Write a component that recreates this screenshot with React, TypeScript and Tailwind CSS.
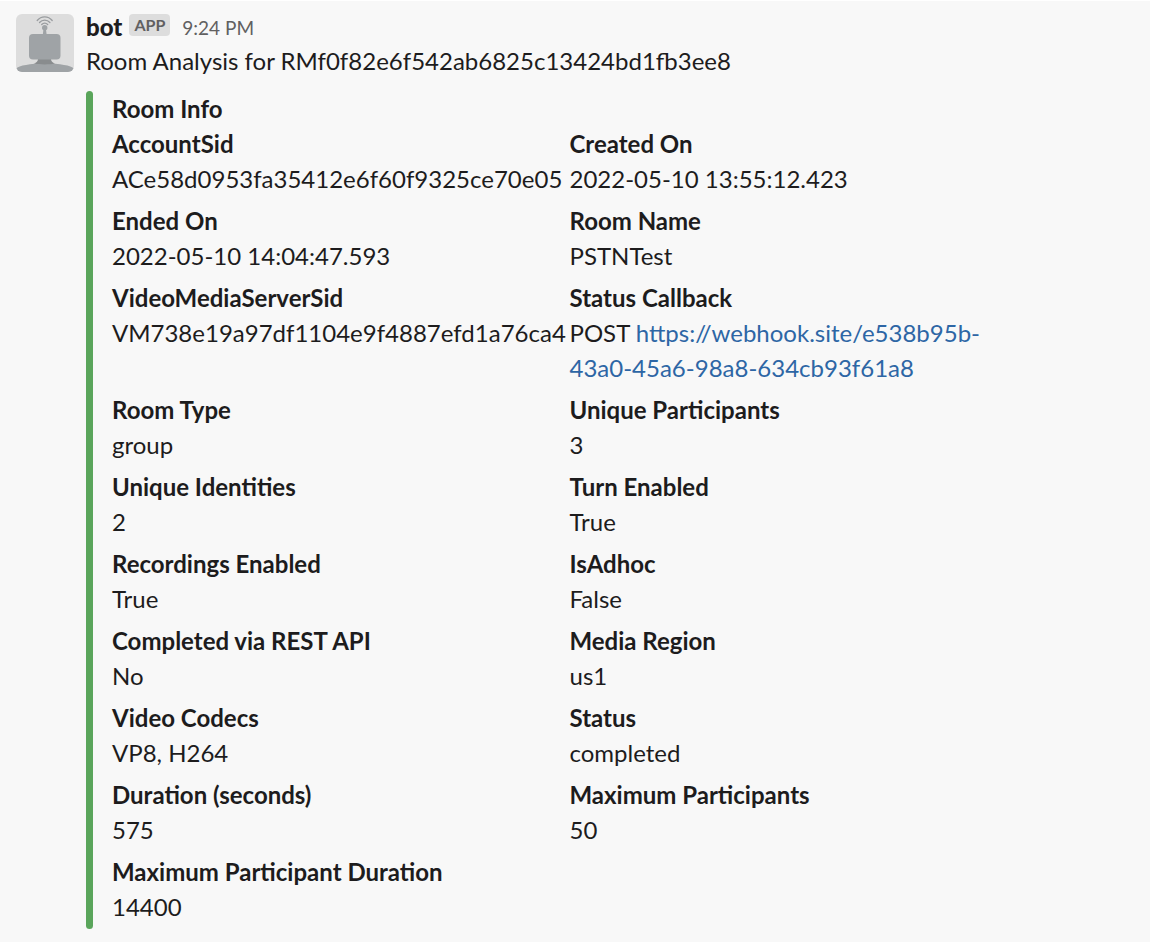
const fields: { label: string; value: string; link?: string }[] = [
  { label: "AccountSid", value: "ACe58d0953fa35412e6f60f9325ce70e05" },
  { label: "Created On", value: "2022-05-10 13:55:12.423" },
  { label: "Ended On", value: "2022-05-10 14:04:47.593" },
  { label: "Room Name", value: "PSTNTest" },
  { label: "VideoMediaServerSid", value: "VM738e19a97df1104e9f4887efd1a76ca4" },
  { label: "Status Callback", value: "POST ", link: "https://webhook.site/e538b95b-43a0-45a6-98a8-634cb93f61a8" },
  { label: "Room Type", value: "group" },
  { label: "Unique Participants", value: "3" },
  { label: "Unique Identities", value: "2" },
  { label: "Turn Enabled", value: "True" },
  { label: "Recordings Enabled", value: "True" },
  { label: "IsAdhoc", value: "False" },
  { label: "Completed via REST API", value: "No" },
  { label: "Media Region", value: "us1" },
  { label: "Video Codecs", value: "VP8, H264" },
  { label: "Status", value: "completed" },
  { label: "Duration (seconds)", value: "575" },
  { label: "Maximum Participants", value: "50" },
  { label: "Maximum Participant Duration", value: "14400" },
];

function BotAvatar() {
  return (
    <svg viewBox="0 0 58 58" className="size-[58px] shrink-0 rounded-[6px]" role="img" aria-label="bot avatar">
      <rect width="58" height="58" fill="#dddddd" />
      <path d="M0 54.500c3-3 14-5 29-5s26 2 29 5V58H0z" fill="#9fa3a6" />
      <path d="M22 45h13c0 2.300 1.500 3.500 4 4.500-6 1.200-15 1.200-21 0 2.500-1 4-2.200 4-4.500z" fill="#898c8e" />
      <rect x="13" y="20" width="31.500" height="25.500" rx="4" fill="#9fa3a6" />
      <path d="M27.600 14h2.200l.8 6.500h-3.800z" fill="#9fa3a6" />
      <circle cx="28.700" cy="13.700" r="2.700" fill="#9fa3a6" />
      <g fill="none" stroke="#999c9f" strokeWidth="1.300" strokeLinecap="round">
        <path d="M21.200 6.500c4-4.800 11-4.800 15 0" />
        <path d="M23.500 8.500c2.800-3.200 7.600-3.200 10.400 0" />
        <path d="M25.700 10.500c1.700-1.800 4.300-1.800 6 0" />
      </g>
    </svg>
  );
}

export default function App() {
  return (
    <main className="border-t border-white bg-[#f8f8f8] px-4 pt-[13px] pb-[13px] font-['Lato',sans-serif] text-[24px] leading-[35px] text-[#1d1c1d]">
      <article className="flex gap-3">
        <BotAvatar />
        <div className="min-w-0 flex-1">
          <header className="flex h-[29px] items-start">
            <span className="leading-[25px] font-black">bot</span>
            <span className="ml-[7px] rounded-[4px] bg-[#dddddd] px-[5px] text-[16px] leading-[22px] font-bold text-[#616061]">APP</span>
            <time className="ml-3 text-[19px] leading-[27px] text-[#616061]">9:24 PM</time>
          </header>
          <p>Room Analysis for RMf0f82e6f542ab6825c13424bd1fb3ee8</p>
          <section className="mt-[13px] flex gap-[19px]">
            <div className="w-[7px] shrink-0 rounded-full bg-[#5aa55b]" />
            <div className="min-w-0 flex-1 pb-[5px]">
              <h2 className="font-bold">Room Info</h2>
              <dl className="grid max-w-[915px] grid-cols-2 gap-y-[7px]">
                {fields.map((f) => (
                  <div key={f.label} className="min-w-0">
                    <dt className="font-bold">{f.label}</dt>
                    <dd className="pr-8">
                      {f.value}
                      {f.link && (
                        <a href={f.link} className="text-[#2d66a5]">
                          {f.link}
                        </a>
                      )}
                    </dd>
                  </div>
                ))}
              </dl>
            </div>
          </section>
        </div>
      </article>
    </main>
  );
}
